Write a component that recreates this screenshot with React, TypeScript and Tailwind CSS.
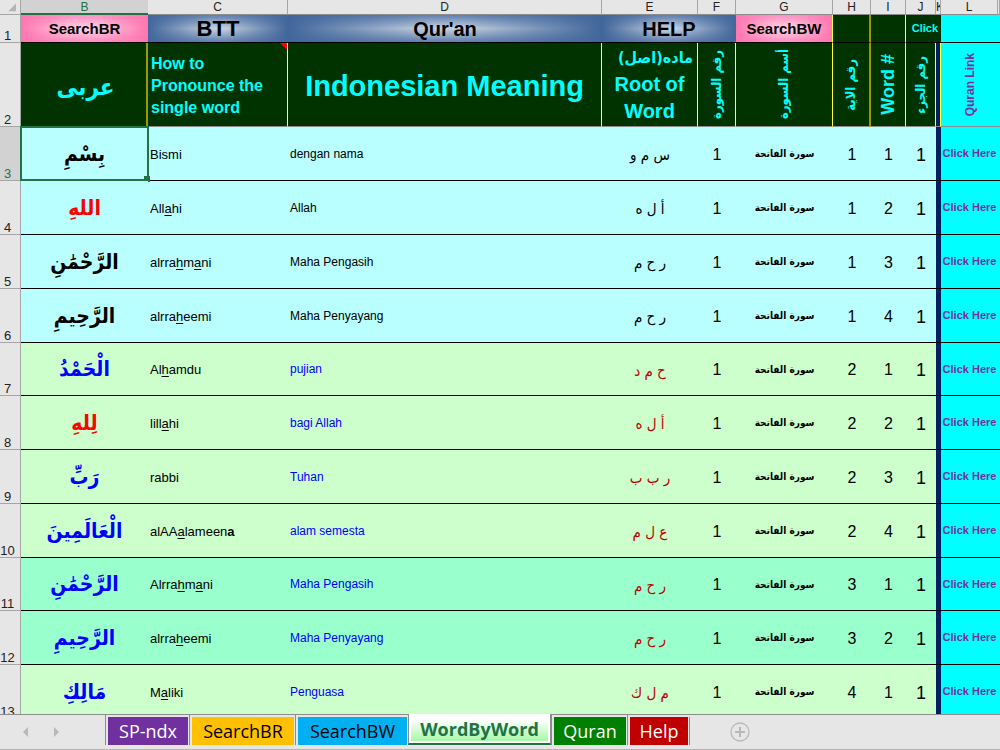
import React from "react";

type Tone = "cyan" | "green" | "mint";

interface Row {
  n: number;
  arabic: string;
  arabicColor: string;
  say: React.ReactNode;
  meaning: string;
  root: string;
  aya: number;
  word: number;
  tone: Tone;
}

const U = ({ children }: { children: React.ReactNode }) => (
  <span className="underline underline-offset-2">{children}</span>
);

const rows: Row[] = [
  { n: 3, arabic: "بِسْمِ", arabicColor: "text-black", say: "Bismi", meaning: "dengan nama", root: "س م و", aya: 1, word: 1, tone: "cyan" },
  { n: 4, arabic: "اللهِ", arabicColor: "text-[#ff0000]", say: <>All<U>a</U>hi</>, meaning: "Allah", root: "أ ل ه", aya: 1, word: 2, tone: "cyan" },
  { n: 5, arabic: "الرَّحْمَٰنِ", arabicColor: "text-black", say: <>alrra<U>h</U>m<U>a</U>ni</>, meaning: "Maha Pengasih", root: "ر ح م", aya: 1, word: 3, tone: "cyan" },
  { n: 6, arabic: "الرَّحِيمِ", arabicColor: "text-black", say: <>alrra<U>h</U>eemi</>, meaning: "Maha Penyayang", root: "ر ح م", aya: 1, word: 4, tone: "cyan" },
  { n: 7, arabic: "الْحَمْدُ", arabicColor: "text-[#0000ff]", say: <>Al<U>h</U>amdu</>, meaning: "pujian", root: "ح م د", aya: 2, word: 1, tone: "green" },
  { n: 8, arabic: "لِلهِ", arabicColor: "text-[#ff0000]", say: <>lill<U>a</U>hi</>, meaning: "bagi Allah", root: "أ ل ه", aya: 2, word: 2, tone: "green" },
  { n: 9, arabic: "رَبِّ", arabicColor: "text-[#0000ff]", say: "rabbi", meaning: "Tuhan", root: "ر ب ب", aya: 2, word: 3, tone: "green" },
  { n: 10, arabic: "الْعَالَمِينَ", arabicColor: "text-[#0000ff]", say: <>alAA<U>a</U>lameen<b>a</b></>, meaning: "alam semesta", root: "ع ل م", aya: 2, word: 4, tone: "green" },
  { n: 11, arabic: "الرَّحْمَٰنِ", arabicColor: "text-[#0000ff]", say: <>Alrra<U>h</U>m<U>a</U>ni</>, meaning: "Maha Pengasih", root: "ر ح م", aya: 3, word: 1, tone: "mint" },
  { n: 12, arabic: "الرَّحِيمِ", arabicColor: "text-[#0000ff]", say: <>alrra<U>h</U>eemi</>, meaning: "Maha Penyayang", root: "ر ح م", aya: 3, word: 2, tone: "mint" },
  { n: 13, arabic: "مَالِكِ", arabicColor: "text-[#0000ff]", say: <>M<U>a</U>liki</>, meaning: "Penguasa", root: "م ل ك", aya: 4, word: 1, tone: "green" },
];

const toneClass: Record<Tone, string> = {
  cyan: "bg-[#b9ffff]",
  green: "bg-[#ccffcc]",
  mint: "bg-[#99ffcc]",
};

const columns = [
  { id: "B", width: "w-[127px]" },
  { id: "C", width: "w-[140px]" },
  { id: "D", width: "" },
  { id: "E", width: "w-[96px]" },
  { id: "F", width: "w-[38px]" },
  { id: "G", width: "w-[97px]" },
  { id: "H", width: "w-[38px]" },
  { id: "I", width: "w-[35px]" },
  { id: "J", width: "w-[30px]" },
  { id: "K", width: "w-[5px]" },
  { id: "L", width: "w-[57px]" },
  { id: "", width: "w-[2px]" },
];

const blue =
  "bg-[linear-gradient(to_right,#41669b,#41669b00_45%,#41669b00_55%,#41669b),linear-gradient(to_bottom,#5f7fae,#c6d1e0_50%,#5f7fae)]";
const pink =
  "bg-[linear-gradient(to_right,#ff76b0,#ff76b000_40%,#ff76b000_60%,#ff76b0),linear-gradient(to_bottom,#ff8fc0,#ffd0e4_50%,#ff8fc0)]";

const head = "border-b border-b-[#8c8c8c] bg-[#003300] text-[#00ffff] font-bold";
const yellow = "border-r border-r-[#ffff33]";
const arabicFont = "font-['DejaVu_Sans_Condensed','DejaVu_Sans',sans-serif]";

function Vertical({ children }: { children: React.ReactNode }) {
  return (
    <div className="flex items-center justify-center">
      <span className="rotate-180 whitespace-nowrap [writing-mode:vertical-rl]">{children}</span>
    </div>
  );
}

function Sheet() {
  return (
    <table className="w-full table-fixed border-separate border-spacing-0">
      <colgroup>
        <col className="w-[21px]" />
        {columns.map((c) => (
          <col key={c.id} className={c.width} />
        ))}
      </colgroup>
      <thead>
        <tr className="bg-[#e6e6e6] text-xs leading-3 text-[#222222]">
          <td className="h-[15px] border-r border-b border-[#a6a6a6] p-0">
            <svg viewBox="0 0 20 14" className="block h-3 w-5" aria-hidden="true">
              <path d="M17 3v9H8z" fill="#b4b4b4" />
            </svg>
          </td>
          {columns.map((c) => (
            <th
              key={c.id}
              scope="col"
              className={`overflow-hidden p-0 font-normal ${
                c.id === "B"
                  ? "border-b-2 border-b-[#217346] bg-[#d2d2d2] text-[#217346]"
                  : "border-r border-b border-r-[#a6a6a6] border-b-[#8c8c8c]"
              }`}
            >
              {c.id}
            </th>
          ))}
        </tr>
        <tr>
          <RowHead n={1} height="h-7" />
          <td className="border-b border-black p-0">
            <button className={`block h-[27px] w-full pt-px text-[15px] font-bold ${pink}`}>SearchBR</button>
          </td>
          <td className="border-b border-black p-0">
            <button className={`block h-[27px] w-full pt-px text-[22px] leading-[26px] font-bold ${blue}`}>BTT</button>
          </td>
          <td className="border-b border-black p-0">
            <button className={`block h-[27px] w-full pt-px text-xl leading-[26px] font-bold ${blue}`}>Qur'an</button>
          </td>
          <td colSpan={2} className="border-b border-black p-0">
            <button className={`block h-[27px] w-full pt-px text-xl leading-[26px] font-bold ${blue}`}>HELP</button>
          </td>
          <td className={`border-b border-b-black p-0 ${yellow}`}>
            <button className={`block h-[27px] w-full pt-px text-[15px] font-bold ${pink}`}>SearchBW</button>
          </td>
          <td className="border-r-2 border-b border-r-[#999900] border-b-black bg-[#003300] p-0" />
          <td className={`border-b border-b-black bg-[#003300] p-0 ${yellow}`} />
          <td colSpan={2} className="border-b border-black bg-[#003300] p-0 pr-[3px] text-right text-[11px] font-bold text-[#00ffff]">
            Click
          </td>
          <td className="border-b border-black bg-[#00ffff] p-0" />
          <td className="border-b border-black bg-[#00ffff] p-0" />
        </tr>
        <tr>
          <RowHead n={2} height="h-[84px]" />
          <th scope="col" lang="ar" dir="rtl" className={`${head} ${arabicFont} border-r-2 border-r-[#999900] p-0 pt-1 text-2xl`}>
            عربى
          </th>
          <th scope="col" className={`${head} ${yellow} relative p-0 pt-0.5 pl-[3px] text-left text-base leading-[22px]`}>
            How to Pronounce the single word
            <span className="absolute top-0 right-0 size-[7px] bg-[#ff0000] [clip-path:polygon(0_0,100%_0,100%_100%)]" />
          </th>
          <th scope="col" className={`${head} ${yellow} p-0 pt-1 text-[29px]`}>
            Indonesian Meaning
          </th>
          <th scope="col" className={`${head} ${yellow} p-0 text-xl leading-[27px]`}>
            <div lang="ar" dir="rtl" className={`pr-1 text-start text-base leading-[27px] whitespace-nowrap ${arabicFont}`}>
              ماده(اصل)
            </div>
            Root of Word
          </th>
          <th scope="col" lang="ar" className={`${head} ${yellow} ${arabicFont} p-0 text-[13px]`}>
            <Vertical>رقم السورة</Vertical>
          </th>
          <th scope="col" lang="ar" className={`${head} ${yellow} ${arabicFont} p-0 text-[13px]`}>
            <Vertical>أسم السورة</Vertical>
          </th>
          <th scope="col" lang="ar" className={`${head} ${arabicFont} border-r-2 border-r-[#999900] p-0 text-[13px]`}>
            <Vertical>رقم الاية</Vertical>
          </th>
          <th scope="col" className={`${head} ${yellow} p-0 text-lg`}>
            <Vertical>Word #</Vertical>
          </th>
          <th scope="col" lang="ar" className={`${head} ${yellow} ${arabicFont} p-0 text-[13px]`}>
            <Vertical>رقم الجزء</Vertical>
          </th>
          <td className={`border-b border-b-[#8c8c8c] bg-[#002060] p-0 ${yellow}`} />
          <th scope="col" className="border-b border-[#8c8c8c] bg-[#00ffff] p-0 text-xs font-bold text-[#7030a0]">
            <Vertical>Quran Link</Vertical>
          </th>
          <td className="border-b border-[#8c8c8c] bg-[#00ffff] p-0" />
        </tr>
      </thead>
      <tbody>
        {rows.map((r) => (
          <DataRow key={r.n} row={r} />
        ))}
      </tbody>
    </table>
  );
}

function RowHead({ n, height, active = false }: { n: number; height: string; active?: boolean }) {
  return (
    <th
      scope="row"
      className={`${height} border-r border-b border-[#a6a6a6] p-0 pr-[5px] align-bottom text-[13px] leading-3 font-normal ${
        active ? "bg-[#d2d2d2] text-[#217346]" : "bg-[#e6e6e6] text-[#222222]"
      }`}
    >
      {n}
    </th>
  );
}

function DataRow({ row }: { row: Row }) {
  const cell = `border-b border-black p-0 ${toneClass[row.tone]}`;
  const blueText = row.tone === "cyan" ? "text-black" : "text-[#0000ff]";
  const redText = row.tone === "cyan" ? "text-black" : "text-[#c00000]";
  const height = row.n === 7 || row.n === 11 ? "h-[53px]" : "h-[54px]";
  return (
    <tr>
      <RowHead n={row.n} height={height} active={row.n === 3} />
      <td lang="ar" dir="rtl" className={`${cell} relative text-center text-[21px] leading-8 font-bold ${arabicFont} ${row.arabicColor}`}>
        {row.arabic}
        {row.n === 3 && (
          <span className="pointer-events-none absolute -inset-px border-2 border-[#217346]">
            <span className="absolute -right-[3px] -bottom-[3px] size-[6px] bg-[#217346]" />
          </span>
        )}
      </td>
      <td className={`${cell} pt-0.5 pl-0.5 text-[13px]`}>{row.say}</td>
      <td className={`${cell} pl-0.5 text-xs ${blueText}`}>{row.meaning}</td>
      <td lang="ar" dir="rtl" className={`${cell} pt-1 text-center text-[15px] ${arabicFont} ${redText}`}>
        {row.root}
      </td>
      <td className={`${cell} pt-0.5 text-center text-base`}>1</td>
      <td lang="ar" dir="rtl" className={`${cell} text-center text-[10px] font-bold whitespace-nowrap ${arabicFont}`}>
        سورة الفاتحة
      </td>
      <td className={`${cell} pt-0.5 text-center text-base`}>{row.aya}</td>
      <td className={`${cell} pt-0.5 text-center text-base`}>{row.word}</td>
      <td className={`${cell} pt-0.5 text-center text-lg`}>1</td>
      <td className="border-b border-black bg-[#002060] p-0" />
      <td className="border-b border-black bg-[#00ffff] p-0 text-center text-[11px] font-bold whitespace-nowrap text-[#7030a0]">
        <a href="#quran">Click Here</a>
      </td>
      <td className="border-b border-black bg-[#00ffff] p-0" />
    </tr>
  );
}

const tabs = [
  { label: "SP-ndx", style: "w-20 bg-[#7030a0] text-white" },
  { label: "SearchBR", style: "w-[102px] bg-[#ffc000] text-black" },
  { label: "SearchBW", style: "w-[109px] bg-[#00b0f0] text-black" },
  { label: "WordByWord", style: "" },
  { label: "Quran", style: "w-[72px] bg-[#008000] text-white" },
  { label: "Help", style: "w-[58px] bg-[#c00000] text-white" },
];

function TabBar() {
  return (
    <nav
      aria-label="Sheets"
      className="flex h-9 shrink-0 items-start border-y border-t-[#8c8c8c] border-b-[#b4b4b4] bg-[#e6e6e6] font-['Open_Sans','Noto_Sans',sans-serif] text-lg"
    >
      <div className="flex h-[34px] w-[105px] shrink-0 items-center gap-6 pl-[22px]">
        <button aria-label="Previous sheet">
          <svg viewBox="0 0 7 10" className="block h-2.5 w-[7px]" fill="#b8b8b8">
            <path d="M6 0v10L1 5z" />
          </svg>
        </button>
        <button aria-label="Next sheet">
          <svg viewBox="0 0 7 10" className="block h-2.5 w-[7px]" fill="#b8b8b8">
            <path d="M1 0v10l5-5z" />
          </svg>
        </button>
      </div>
      <div className="flex items-start">
        {tabs.map((t) =>
          t.label === "WordByWord" ? (
            <button
              key={t.label}
              aria-current="page"
              className="-mt-px h-[31px] w-[143px] border-x border-b-2 border-x-[#8c8c8c] border-b-[#217346] bg-[linear-gradient(to_bottom,#ffffff_20%,#9df79d)] leading-[30px] font-bold text-[#217346] inset-shadow-[0_0_0_2px_#ffffff]"
            >
              {t.label}
            </button>
          ) : (
            <div key={t.label} className="flex border-l border-[#8c8c8c] pt-0.5 pr-px pl-0.5">
              <button className={`h-7 leading-[26px] ${t.style}`}>{t.label}</button>
            </div>
          ),
        )}
        <span className="mt-0.5 h-7 w-px bg-[#8c8c8c]" />
      </div>
      <button aria-label="New sheet" className="mt-[7px] ml-10">
        <svg viewBox="0 0 20 20" className="block size-5" fill="none" stroke="#b8b8b8">
          <circle cx="10" cy="10" r="9" strokeWidth="1.3" />
          <path d="M10 5v10M5 10h10" strokeWidth="2" />
        </svg>
      </button>
    </nav>
  );
}

export default function App() {
  return (
    <div className="flex h-screen flex-col overflow-hidden bg-white font-['Liberation_Sans',Arial,sans-serif] text-black">
      <main className="min-h-0 flex-1 overflow-hidden">
        <Sheet />
      </main>
      <TabBar />
    </div>
  );
}
